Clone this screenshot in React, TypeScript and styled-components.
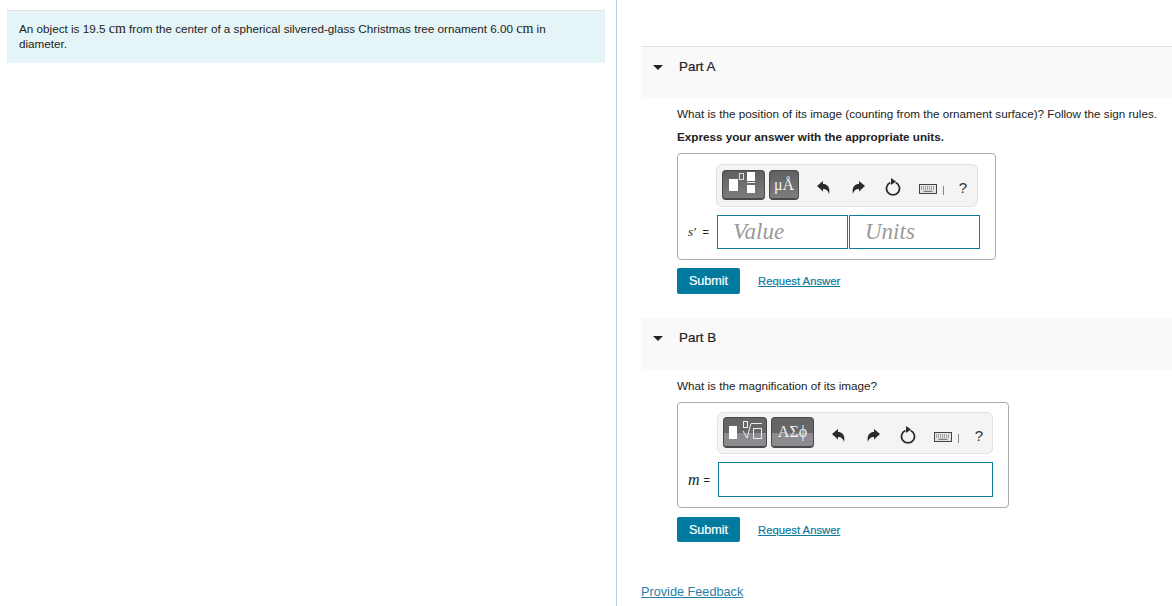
import React from 'react';
import styled, { createGlobalStyle } from 'styled-components';

const GlobalStyle = createGlobalStyle`
	html, body {
		margin: 0;
		padding: 0;
		background: #fff;
		font-family: 'Liberation Sans', Arial, sans-serif;
		color: #222;
	}
`;

const Page = styled.div`
	display: flex;
	width: 1172px;
	height: 606px;
	overflow: hidden;
`;

const LeftColumn = styled.div`
	width: 617px;
	flex: none;
	padding: 10px 11px 0 7px;
	box-sizing: border-box;
	border-right: 1px solid #bdd0e0;
`;

const Intro = styled.div`
	border-top: 1px solid #dfe3e6;
	background: #e5f5f7;
	height: 53px;
	box-sizing: border-box;
	padding: 10px 50px 0 12px;
	font-size: 11.7px;
	line-height: 15px;
`;

const Unit = styled.span`
	font-family: 'Liberation Serif', serif;
	font-size: 14px;
	line-height: 1;
`;

const RightColumn = styled.div`
	flex: 1;
	padding: 46px 0 0 24px;
	min-width: 0;
`;

const PartHeader = styled.div<{ $ruled?: boolean }>`
	display: flex;
	align-items: flex-start;
	height: 51px;
	box-sizing: border-box;
	padding: 12px 0 0 12px;
	background: #f9f9f9;
	border-top: ${(p) => (p.$ruled ? '1px solid #e0e0e0' : '0')};
`;

const Caret = styled.span`
	width: 0;
	height: 0;
	margin: 6px 16px 0 0;
	border-left: 5px solid transparent;
	border-right: 5px solid transparent;
	border-top: 5px solid #222;
`;

const PartTitle = styled.h2`
	margin: 0;
	font-size: 13.4px;
	line-height: 16px;
	font-weight: 400;
	-webkit-text-stroke: 0.2px #222;
`;

const PartBody = styled.div`
	padding-left: 36px;
`;

const Question = styled.p`
	margin: 9px 0 0;
	font-size: 11.7px;
	line-height: 15px;
	white-space: nowrap;
`;

const Instruction = styled.p`
	margin: 8px 0 0;
	font-size: 11.7px;
	line-height: 15px;
	font-weight: 700;
`;

const AnswerBox = styled.div<{ $width: number; $height: number; $top: number; $pad: number }>`
	width: ${(p) => p.$width}px;
	height: ${(p) => p.$height}px;
	margin-top: ${(p) => p.$top}px;
	box-sizing: border-box;
	border: 1px solid #aaa;
	border-radius: 4px;
	padding: ${(p) => p.$pad}px 0 0 10px;
`;

const Toolbar = styled.div<{ $width: number; $height: number; $left: number; $padTop: number }>`
	display: flex;
	align-items: flex-start;
	width: ${(p) => p.$width}px;
	height: ${(p) => p.$height}px;
	margin-left: ${(p) => p.$left}px;
	box-sizing: border-box;
	padding: ${(p) => p.$padTop}px 0 0 5px;
	background: #f4f4f4;
	border: 1px solid #e2e2e2;
	border-radius: 6px;
`;

const TemplateButton = styled.div<{ $width: number; $height: number; $split?: boolean }>`
	display: flex;
	align-items: center;
	justify-content: center;
	width: ${(p) => p.$width}px;
	height: ${(p) => p.$height}px;
	margin-right: 4px;
	flex: none;
	box-sizing: border-box;
	border: 1px solid #4a4a4a;
	border-bottom-width: 2px;
	border-radius: 4px;
	background: ${(p) =>
		p.$split ? 'linear-gradient(#666668 52%, #8c8c90 52%)' : 'linear-gradient(#5f5f61, #7d7d80)'};
	color: #f2f2f2;
	font-family: 'Liberation Serif', serif;
	font-size: 16px;
	white-space: nowrap;
`;

const ToolIcons = styled.div<{ $top: number }>`
	display: flex;
	align-items: center;
	height: 32px;
	margin-top: ${(p) => p.$top}px;
	padding-left: 3px;
	flex: none;
`;

const ToolSlot = styled.span<{ $width: number; $drop?: number; $inset?: number }>`
	display: flex;
	align-items: center;
	justify-content: center;
	width: ${(p) => p.$width}px;
	margin-top: ${(p) => p.$drop || 0}px;
	padding-left: ${(p) => p.$inset || 0}px;
	box-sizing: border-box;
	flex: none;
`;

const Pipe = styled.span`
	width: 1px;
	height: 9px;
	margin-top: 7px;
	background: #888;
	flex: none;
`;

const Help = styled.span`
	font-size: 15px;
	color: #333;
`;

const InputRow = styled.div<{ $top: number }>`
	display: flex;
	align-items: center;
	margin-top: ${(p) => p.$top}px;
`;

const VarLabel = styled.span<{ $width: number; $size: number }>`
	display: flex;
	justify-content: space-between;
	align-items: center;
	width: ${(p) => p.$width}px;
	margin-right: 8px;
	flex: none;
	white-space: nowrap;
	font-family: 'Liberation Serif', serif;
	font-style: italic;
	font-size: ${(p) => p.$size}px;
`;

const Equals = styled.span`
	font-family: 'Liberation Sans', sans-serif;
	font-style: normal;
	font-size: 11px;
`;

const Field = styled.div<{ $width: number; $height: number }>`
	width: ${(p) => p.$width}px;
	height: ${(p) => p.$height}px;
	margin-right: 1px;
	box-sizing: border-box;
	flex: none;
	padding-left: 15px;
	border: 1px solid #0f7c9c;
	font-family: 'Liberation Serif', serif;
	font-style: italic;
	font-size: 23px;
	line-height: 31px;
	color: #9a9a9a;
`;

const Actions = styled.div<{ $top: number }>`
	display: flex;
	align-items: center;
	gap: 18px;
	margin-top: ${(p) => p.$top}px;
`;

const SubmitButton = styled.button<{ $height: number }>`
	width: 63px;
	height: ${(p) => p.$height}px;
	padding: 0;
	border: 0;
	border-radius: 2px;
	background: #007b9f;
	color: #fff;
	font-family: 'Liberation Sans', sans-serif;
	font-size: 12.6px;
	-webkit-text-stroke: 0.2px #fff;
`;

const RequestLink = styled.a`
	font-size: 11.3px;
	color: #0d7a9e;
	text-decoration: underline;
	-webkit-text-stroke: 0.2px #0d7a9e;
	cursor: pointer;
`;

const FeedbackLink = styled.a`
	display: block;
	margin-top: 42px;
	font-size: 12.7px;
	line-height: 16px;
	color: #2a7ea8;
	text-decoration: underline;
	cursor: pointer;
`;

const Spacer = styled.div<{ $height: number }>`
	height: ${(p) => p.$height}px;
`;

// small glyph drawings used by the toolbar
const UndoIcon = () => (
	<svg width="13" height="13" viewBox="0 0 13 13">
		<path d="M0 5 L6 0 V3 C10.5 3 13.5 6.5 12 13 C11 9.5 9.5 8 6 8 V10.4 Z" fill="#2b2b2b" />
	</svg>
);

const RedoIcon = () => (
	<svg width="13" height="13" viewBox="0 0 13 13">
		<path d="M13 5 L7 0 V3 C2.5 3 -0.5 6.5 1 13 C2 9.5 3.5 8 7 8 V10.4 Z" fill="#2b2b2b" />
	</svg>
);

const ResetIcon = () => (
	<svg width="16" height="18" viewBox="0 0 16 18">
		<path d="M5.4 4.5 A6.5 6.5 0 1 0 10.6 4.5" fill="none" stroke="#2b2b2b" strokeWidth="1.8" />
		<path d="M6 0 L11 3.6 L6 7 Z" fill="#2b2b2b" />
	</svg>
);

const KeyboardIcon = () => (
	<svg width="18" height="10" viewBox="0 0 18 10">
		<rect x="0.5" y="0.5" width="17" height="9" fill="#e4e4e4" stroke="#444" />
		<path d="M2 3 H16 M2 5 H16" stroke="#666" strokeWidth="1" strokeDasharray="1 1" />
		<path d="M4.5 7.3 H13.5" stroke="#666" strokeWidth="1" />
	</svg>
);

const FractionGlyph = () => (
	<svg width="41" height="27" viewBox="0 0 41 27">
		<rect x="6" y="8" width="9" height="12" fill="#fff" />
		<rect x="16.5" y="2.5" width="4" height="6" fill="none" stroke="#ddd" />
		<rect x="24" y="1" width="8" height="9" fill="#fff" />
		<rect x="24" y="11" width="8" height="1" fill="#eee" />
		<rect x="24" y="14" width="8" height="8" fill="#fff" />
	</svg>
);

const RadicalGlyph = () => (
	<svg width="42" height="28" viewBox="0 0 42 28">
		<rect x="5" y="8" width="8" height="13" fill="#fff" />
		<rect x="19.5" y="3.5" width="4" height="6" fill="none" stroke="#eee" />
		<path d="M19 13 L23 20 L27 5.5 H38" fill="none" stroke="#eee" />
		<rect x="29.5" y="10.5" width="8" height="10" fill="none" stroke="#eee" />
	</svg>
);

const ToolbarIcons: React.FC<{ helpWidth: number; top: number }> = ({ helpWidth, top }) => (
	<ToolIcons $top={top}>
		<ToolSlot $width={35}><UndoIcon /></ToolSlot>
		<ToolSlot $width={35}><RedoIcon /></ToolSlot>
		<ToolSlot $width={33}><ResetIcon /></ToolSlot>
		<ToolSlot $width={34} $inset={4} $drop={4}><KeyboardIcon /></ToolSlot>
		<Pipe />
		<ToolSlot $width={helpWidth}><Help>?</Help></ToolSlot>
	</ToolIcons>
);

const App: React.FC = () => (
	<Page>
		<GlobalStyle />
		<LeftColumn>
			<Intro>
				An object is 19.5 <Unit>cm</Unit> from the center of a spherical silvered-glass Christmas tree ornament 6.00{' '}
				<Unit>cm</Unit> in diameter.
			</Intro>
		</LeftColumn>
		<RightColumn>
			<PartHeader $ruled>
				<Caret />
				<PartTitle>Part A</PartTitle>
			</PartHeader>
			<PartBody>
				<Question>What is the position of its image (counting from the ornament surface)? Follow the sign rules.</Question>
				<Instruction>Express your answer with the appropriate units.</Instruction>
				<AnswerBox $width={319} $height={107} $top={9} $pad={10}>
					<Toolbar $width={262} $height={43} $left={28} $padTop={5}>
						<TemplateButton $width={43} $height={30}>
							<FractionGlyph />
						</TemplateButton>
						<TemplateButton $width={30} $height={30}>
							μÅ
						</TemplateButton>
						<ToolbarIcons helpWidth={38} top={1} />
					</Toolbar>
					<InputRow $top={8}>
						<VarLabel $width={21} $size={13}>
							s′<Equals>=</Equals>
						</VarLabel>
						<Field $width={131} $height={34}>Value</Field>
						<Field $width={131} $height={34}>Units</Field>
					</InputRow>
				</AnswerBox>
				<Actions $top={8}>
					<SubmitButton $height={26}>Submit</SubmitButton>
					<RequestLink>Request Answer</RequestLink>
				</Actions>
			</PartBody>
			<Spacer $height={24} />
			<PartHeader>
				<Caret />
				<PartTitle>Part B</PartTitle>
			</PartHeader>
			<PartBody>
				<Question>What is the magnification of its image?</Question>
				<AnswerBox $width={332} $height={106} $top={9} $pad={9}>
					<Toolbar $width={276} $height={42} $left={29} $padTop={4}>
						<TemplateButton $width={44} $height={31} $split>
							<RadicalGlyph />
						</TemplateButton>
						<TemplateButton $width={43} $height={31} $split>
							ΑΣϕ
						</TemplateButton>
						<ToolbarIcons helpWidth={40} top={2} />
					</Toolbar>
					<InputRow $top={8}>
						<VarLabel $width={22} $size={16}>
							m<Equals>=</Equals>
						</VarLabel>
						<Field $width={275} $height={35} />
					</InputRow>
				</AnswerBox>
				<Actions $top={9}>
					<SubmitButton $height={25}>Submit</SubmitButton>
					<RequestLink>Request Answer</RequestLink>
				</Actions>
			</PartBody>
			<FeedbackLink>Provide Feedback</FeedbackLink>
		</RightColumn>
	</Page>
);

export default App;
